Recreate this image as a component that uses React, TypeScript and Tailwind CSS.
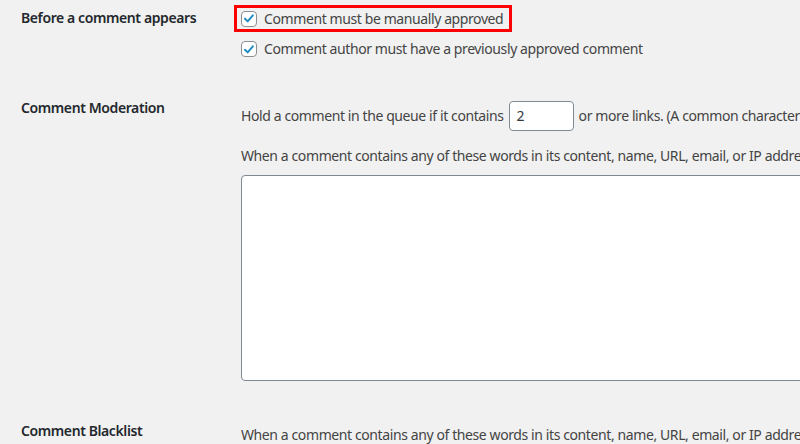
function Check() {
  return (
    <span className="inline-flex h-4 w-4 shrink-0 items-center justify-center rounded-[4px] border border-[#8c8f94] bg-white">
      <svg viewBox="0 0 20 20" className="h-[17px] w-[17px]">
        <path d="M4.3 10.3l3.8 3.8 7.4-8.6" fill="none" stroke="#1e8cbe" strokeWidth="2.8" strokeLinecap="round" strokeLinejoin="round" />
      </svg>
    </span>
  );
}

export default function App() {
  return (
    <div
      className="h-[444px] w-[800px] overflow-hidden bg-[#f1f1f1] text-[14px] leading-5 tracking-[-0.4px] text-[#444]"
      style={{ fontFamily: '"Noto Sans", "Open Sans", sans-serif' }}
    >
      <div className="flex pt-[8px]">
        <div className="w-[241px] shrink-0 pl-[21px] font-semibold text-[#23282d]">Before a comment appears</div>
        <div className="flex flex-col">
          <div className="-ml-[7px] -mt-[3px] flex h-[27px] w-fit items-center gap-[7px] whitespace-nowrap border-[3px] border-[#ff0000] pl-[4px] pr-[6px]">
            <Check />
            <span>Comment must be manually approved</span>
          </div>
          <label className="mt-[7px] flex items-center gap-[7px] whitespace-nowrap">
            <Check />
            <span>Comment author must have a previously approved comment</span>
          </label>
        </div>
      </div>

      <div className="mt-[39px] flex">
        <div className="w-[241px] shrink-0 pl-[21px] font-semibold text-[#23282d]">Comment Moderation</div>
        <div className="flex min-w-0 flex-1 flex-col pt-[3px]">
          <div className="flex items-center whitespace-nowrap">
            <span>Hold a comment in the queue if it contains</span>
            <span className="mx-[5px] flex h-[30px] w-[65px] shrink-0 items-center rounded-[4px] border border-[#7e8993] bg-white px-[7px] text-[#32373c]">2</span>
            <span>or more links. (A common characteristic of comment spam is a large number of hyperlinks.)</span>
          </div>
          <p className="mt-[15px] whitespace-nowrap">
            When a comment contains any of these words in its content, name, URL, email, or IP address, it will be held in the moderation queue.
          </p>
          <div className="mt-[9px] h-[206px] w-[600px] shrink-0 rounded-[4px] border border-[#7e8993] bg-white" />
        </div>
      </div>

      <div className="mt-[40px] flex">
        <div className="w-[241px] shrink-0 pl-[21px] font-semibold text-[#23282d]">Comment Blacklist</div>
        <p className="mt-[4px] whitespace-nowrap">
          When a comment contains any of these words in its content, name, URL, email, or IP address, it will be put in the trash.
        </p>
      </div>
    </div>
  );
}
